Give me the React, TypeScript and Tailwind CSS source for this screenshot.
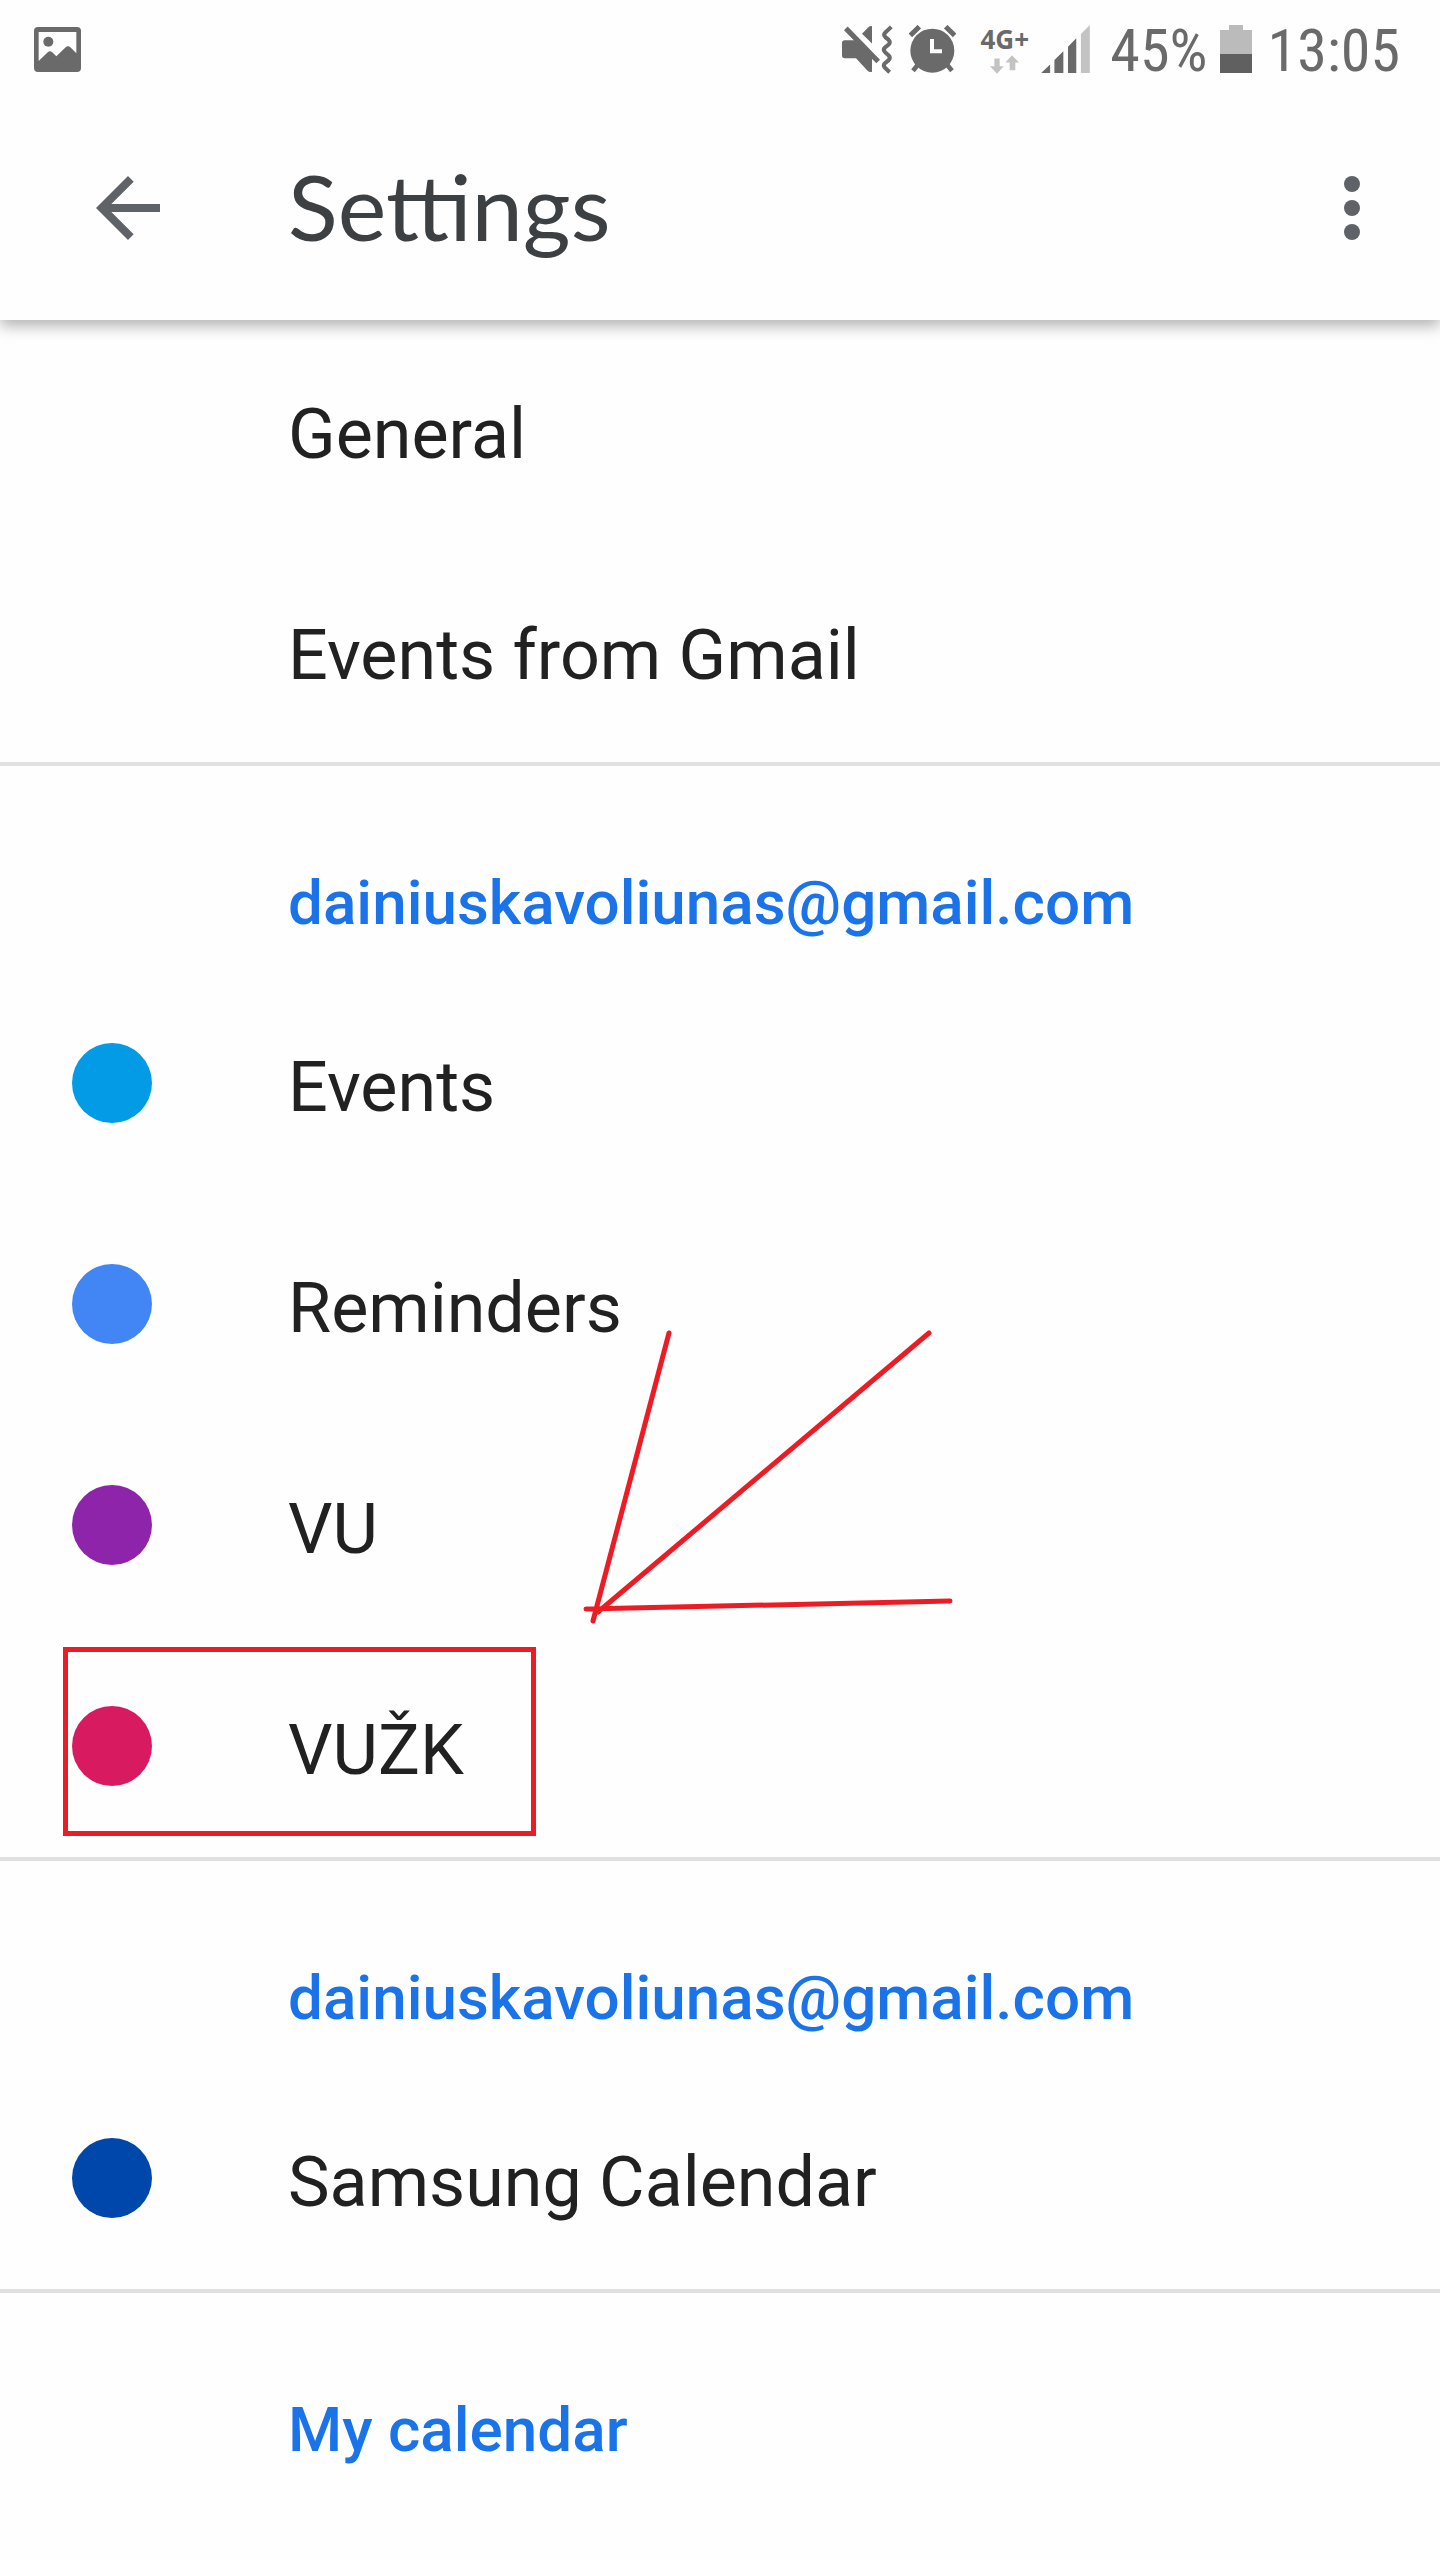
import React from "react";

type Row = { label: string; color?: string; highlighted?: boolean };
type Section = { title?: string; rows: Row[] };

const sections: Section[] = [
  { rows: [{ label: "General" }, { label: "Events from Gmail" }] },
  {
    title: "dainiuskavoliunas@gmail.com",
    rows: [
      { label: "Events", color: "bg-[#039be5]" },
      { label: "Reminders", color: "bg-[#4285f4]" },
      { label: "VU", color: "bg-[#8e24aa]" },
      { label: "VUŽK", color: "bg-[#d81b60]", highlighted: true },
    ],
  },
  {
    title: "dainiuskavoliunas@gmail.com",
    rows: [{ label: "Samsung Calendar", color: "bg-[#0047ab]" }],
  },
  { title: "My calendar", rows: [] },
];

function PictureIcon() {
  return (
    <svg viewBox="0 0 141 135" className="h-[45px] w-[47px]" aria-hidden="true">
      <path
        fill="#6a6a6a"
        fillRule="evenodd"
        d="M12 0H129Q141 0 141 12V123Q141 135 129 135H12Q0 135 0 123V12Q0 0 12 0ZM14 15V102L42 75Q48 70 54 75L67 88L95 61Q102 54 109 61L127 79V15Z"
      />
      <circle cx="43" cy="44" r="15" fill="#6a6a6a" />
    </svg>
  );
}

function MutedVibrateIcon() {
  return (
    <svg viewBox="0 0 153 146" className="h-[49px] w-[51px]" aria-hidden="true">
      <g fill="#6a6a6a">
        <path d="M8 45H40L90 96V140Q82 142 76 136L42 99H8Q0 99 0 91V53Q0 45 8 45Z" />
        <path d="M60 26L79 6Q84 2 90 3V55Z" />
        <path d="M17 4L114 104L103 114L6 15Z" />
      </g>
      <path
        d="M148 5L130 22Q123 29 130 36L140 44Q147 51 140 58L129 67Q122 74 129 81L140 91Q147 98 140 105L129 114Q122 121 129 128L143 141"
        fill="none"
        stroke="#6a6a6a"
        strokeWidth="12"
      />
    </svg>
  );
}

function AlarmIcon() {
  return (
    <svg viewBox="0 0 141 144" className="h-[48px] w-[47px]" aria-hidden="true">
      <g stroke="#6a6a6a" fill="none">
        <path d="M4 31L31 5M137 31L110 5" strokeWidth="15" />
        <path d="M26 120L12 137M115 120L129 137" strokeWidth="14" />
      </g>
      <circle cx="70" cy="77" r="66" fill="#6a6a6a" />
      <path d="M69 42V79H99" fill="none" stroke="#fefefe" strokeWidth="12" />
    </svg>
  );
}

function DataArrowsIcon() {
  return (
    <svg viewBox="0 0 87 56" className="mt-[2px] h-[19px] w-[29px]" aria-hidden="true">
      <path
        fill="#c3c3c3"
        d="M13 10H29V33H41L21 56L0 33H13ZM66 0L87 22H76V45H59V22H46Z"
      />
    </svg>
  );
}

function SignalIcon() {
  return (
    <svg viewBox="0 0 147 145" className="h-[48px] w-[49px]" aria-hidden="true">
      <path
        fill="#6a6a6a"
        d="M0 145L27 119V145ZM40 106L67 79V145H40ZM81 66L106 40V145H81Z"
      />
      <path fill="#c3c3c3" d="M120 27L147 0V145H120Z" />
    </svg>
  );
}

function BatteryIcon() {
  return (
    <svg viewBox="0 0 32 48" className="h-[48px] w-[32px]" aria-hidden="true">
      <path fill="#bbbbbb" d="M9 0H23V5H32V30H0V5H9Z" />
      <path fill="#606060" d="M0 29H32V48H0Z" />
    </svg>
  );
}

function StatusBar() {
  return (
    <div className="flex h-24 items-center justify-between pt-[2px] pr-10 pl-[34px] text-[60px] leading-[72px] text-[#6a6a6a]">
      <PictureIcon />
      <div className="flex items-center">
        <MutedVibrateIcon />
        <div className="ml-4">
          <AlarmIcon />
        </div>
        <div className="ml-6 flex w-[49px] flex-col items-center">
          <span className="font-['Noto_Sans'] text-[26px] leading-[28px] font-bold">
            4G+
          </span>
          <DataArrowsIcon />
        </div>
        <div className="ml-3">
          <SignalIcon />
        </div>
        <span className="ml-5 pt-1 font-['Roboto_Condensed','Roboto',sans-serif]">
          45%
        </span>
        <div className="ml-3">
          <BatteryIcon />
        </div>
        <span className="ml-4 pt-1 font-['Roboto_Condensed','Roboto',sans-serif]">
          13:05
        </span>
      </div>
    </div>
  );
}

function AppBar() {
  return (
    <div className="flex h-56 items-center pr-10 pl-20">
      <button type="button" aria-label="Back" className="size-24">
        <svg viewBox="0 0 24 24" className="size-24 fill-[#5f6368]" aria-hidden="true">
          <path d="M20 11H7.83l5.59-5.59L12 4l-8 8 8 8 1.41-1.41L7.83 13H20v-2z" />
        </svg>
      </button>
      <h1 className="ml-28 flex-1 pb-1 font-['Lato',sans-serif] text-[92px] leading-[104px] text-[#3c4043]">
        Settings
      </h1>
      <button type="button" aria-label="More options" className="size-24">
        <svg viewBox="0 0 24 24" className="size-24 fill-[#5f6368]" aria-hidden="true">
          <circle cx="12" cy="6" r="2" />
          <circle cx="12" cy="12" r="2" />
          <circle cx="12" cy="18" r="2" />
        </svg>
      </button>
    </div>
  );
}

function SettingsRow({ label, color, highlighted }: Row) {
  return (
    <li className="relative">
      <button
        type="button"
        className="flex h-[221px] w-full items-center pb-px pl-[72px] text-left text-[70px] leading-[84px] text-[#212121]"
      >
        <span className="w-[216px] shrink-0">
          {color && <span className={`block size-20 rounded-full ${color}`} />}
        </span>
        <span className="pt-2">{label}</span>
      </button>
      {highlighted && (
        <span className="pointer-events-none absolute top-[11px] left-[63px] h-[189px] w-[473px] border-5 border-[#ed1c24]" />
      )}
    </li>
  );
}

function HandDrawnArrow() {
  return (
    <svg
      viewBox="0 0 374 298"
      className="pointer-events-none absolute top-[562px] left-[581px] h-[298px] w-[374px]"
      fill="none"
      stroke="#ed1c24"
      strokeWidth="5"
      strokeLinecap="round"
      aria-hidden="true"
    >
      <path d="M88 5L12 293M348 5L17 284M5 281L369 273" />
    </svg>
  );
}

export default function App() {
  return (
    <div className="min-h-screen bg-[#fefefe] font-['Roboto',sans-serif]">
      <header className="relative z-10 bg-[#fefefe] shadow-[0_6px_14px_rgba(0,0,0,0.3)]">
        <StatusBar />
        <AppBar />
      </header>
      <main>
        {sections.map((section, i) => (
          <section
            key={i}
            className={i > 0 ? "relative border-t-4 border-[#e0e0e0]" : "relative"}
          >
            {section.title && (
              <h2 className="pt-[101px] pr-10 pb-[34px] pl-72 text-[62px] leading-[72px] font-medium text-[#1a73e8]">
                {section.title}
              </h2>
            )}
            <ul>
              {section.rows.map((row) => (
                <SettingsRow key={row.label} {...row} />
              ))}
            </ul>
            {i === 1 && <HandDrawnArrow />}
          </section>
        ))}
      </main>
    </div>
  );
}
